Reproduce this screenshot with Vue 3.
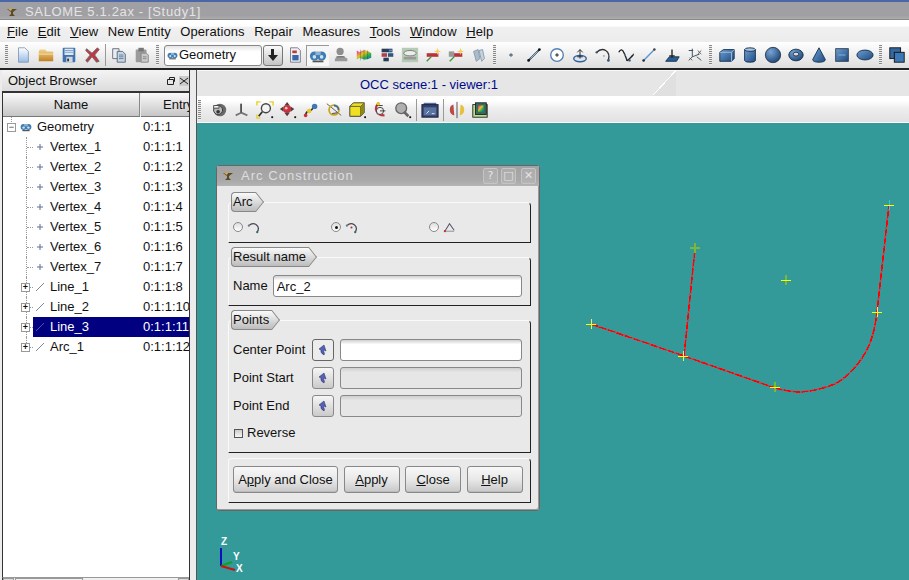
<template>
  <div class="app">
    <!-- icon sprite -->
    <svg class="sprite" aria-hidden="true">
      <defs>
        <linearGradient id="gPage" x1="0" y1="0" x2="0" y2="1"><stop offset="0" stop-color="#fff"/><stop offset="1" stop-color="#93bbe8"/></linearGradient>
        <linearGradient id="gFolder" x1="0" y1="0" x2="0" y2="1"><stop offset="0" stop-color="#f2d28c"/><stop offset="1" stop-color="#c07f22"/></linearGradient>
        <linearGradient id="gBlue" x1="0" y1="0" x2="1" y2="1"><stop offset="0" stop-color="#6f9fd2"/><stop offset="1" stop-color="#1d4a80"/></linearGradient>
        <radialGradient id="gBall" cx=".35" cy=".3" r=".8"><stop offset="0" stop-color="#79a6d6"/><stop offset="1" stop-color="#173f70"/></radialGradient>
        <linearGradient id="gRainbow" x1="0" y1="0" x2="1" y2="1"><stop offset="0" stop-color="#e020c0"/><stop offset=".4" stop-color="#e8c020"/><stop offset=".7" stop-color="#20b050"/><stop offset="1" stop-color="#2060d0"/></linearGradient>
      </defs>
      <symbol id="i-new" viewBox="0 0 20 20"><path d="M5 2h7l4 4v12H5z" fill="url(#gPage)" stroke="#8a9ab0"/></symbol>
      <symbol id="i-open" viewBox="0 0 20 20"><path d="M2 6q0-2 2-2h5l2 2h6q1 0 1 1v10H2z" fill="url(#gFolder)"/><path d="M2 9h16" stroke="#fbe4a8"/></symbol>
      <symbol id="i-save" viewBox="0 0 20 20"><rect x="3" y="2" width="14" height="16" rx="1" fill="#3f73ae"/><rect x="5" y="3" width="10" height="7" fill="#dfe8f2"/><path d="M5 5h10M5 7h10" stroke="#7fa0c8"/><rect x="7" y="12" width="7" height="6" fill="#cfd6de"/><rect x="8" y="14" width="2" height="3" fill="#333"/></symbol>
      <symbol id="i-delete" viewBox="0 0 20 20"><path d="M4 3l6 5 6-6 2 2-5 6 5 7-3 1-5-6-5 6-2-2 5-6-5-5z" fill="#c23642" stroke="#6a6a6a"/></symbol>
      <symbol id="i-copy" viewBox="0 0 20 20"><path d="M3 3h7v11H3z" fill="#e8eef4" stroke="#667"/><path d="M8 6h6l3 3v9H8z" fill="#c6d6e6" stroke="#567"/><path d="M10 10h5M10 12h5M10 14h5" stroke="#678"/></symbol>
      <symbol id="i-paste" viewBox="0 0 20 20"><rect x="3" y="4" width="12" height="14" rx="1" fill="#9b9b9b"/><rect x="6" y="2" width="6" height="4" fill="#777"/><path d="M9 8h6l2 2v8H9z" fill="#c9c9c9" stroke="#888"/><path d="M11 12h4M11 14h4" stroke="#888"/></symbol>
      <symbol id="i-study" viewBox="0 0 20 20"><path d="M5 2h8l3 3v13H5z" fill="#eef0f4" stroke="#778"/><rect x="7" y="5" width="5" height="3" fill="#c03a3a"/><rect x="7" y="10" width="7" height="6" fill="#3868a8"/></symbol>
      <symbol id="i-geom" viewBox="0 0 20 20"><circle cx="6" cy="10" r="5" fill="#3e7cb4"/><circle cx="14" cy="10" r="5" fill="#3e7cb4"/><rect x="7" y="5" width="6" height="4" fill="#8db0cc"/><circle cx="6" cy="11" r="2" fill="#cfe2f0"/><circle cx="14" cy="11" r="2" fill="#cfe2f0"/><path d="M4 16h12" stroke="#555" stroke-width="2"/></symbol>
      <symbol id="i-smesh" viewBox="0 0 20 20"><circle cx="9" cy="6" r="4" fill="#8e8e8e"/><path d="M3 17q0-6 6-6h3l5 3v3z" fill="#999"/><path d="M5 12h9" stroke="#666"/></symbol>
      <symbol id="i-post" viewBox="0 0 20 20"><path d="M2 5v10l3-2q6 4 13 0v-5q-7-6-13-1z" fill="url(#gRainbow)"/><path d="M6 4v12M10 4v12M14 5v10" stroke="#222" stroke-opacity=".35"/></symbol>
      <symbol id="i-blocks" viewBox="0 0 20 20"><rect x="4" y="3" width="12" height="4" fill="#2a3d58"/><rect x="4" y="8" width="6" height="4" fill="#b0404a"/><rect x="11" y="8" width="6" height="4" fill="#33547c"/><rect x="6" y="13" width="6" height="4" fill="#2a3d58"/><rect x="12" y="4" width="4" height="2" fill="#5a90c8"/></symbol>
      <symbol id="i-grid" viewBox="0 0 20 20"><rect x="1" y="2" width="18" height="16" fill="#b4ccb4"/><ellipse cx="10" cy="8" rx="7" ry="3" fill="#ececec" stroke="#777"/><path d="M3 12h14v3H3z" fill="#999"/></symbol>
      <symbol id="i-star" viewBox="0 0 20 20"><rect x="3" y="8" width="13" height="4" fill="#b8323c"/><path d="M3 17l5-5" stroke="#3a9a3a" stroke-width="1.5"/><path d="M15 2l1 3 3 1-3 1-1 3-1-3-3-1 3-1z" fill="#f2d060"/></symbol>
      <symbol id="i-star2" viewBox="0 0 20 20"><rect x="7" y="8" width="10" height="4" fill="#b8323c"/><rect x="2" y="6" width="6" height="6" fill="#999"/><path d="M3 17l5-5" stroke="#3a9a3a" stroke-width="1.5"/><path d="M15 2l1 3 3 1-3 1-1 3-1-3-3-1 3-1z" fill="#f2d060"/></symbol>
      <symbol id="i-pipes" viewBox="0 0 20 20"><path d="M4 6l5-2 2 10-4 3z" fill="#a8bccc" stroke="#8a9aaa"/><path d="M10 5l4-1 2 10-3 3z" fill="#c4d2de" stroke="#8a9aaa"/></symbol>
      <symbol id="i-point" viewBox="0 0 20 20"><path d="M10 8v4M8 10h4" stroke="#5a6f90" stroke-width="1.5"/></symbol>
      <symbol id="i-line" viewBox="0 0 20 20"><path d="M4 16L16 4" stroke="#28405f" stroke-width="2"/><path d="M6 14L14 6" stroke="#a8c4e4"/><circle cx="4" cy="16" r="1.5" fill="#111"/><circle cx="16" cy="4" r="1.5" fill="#111"/></symbol>
      <symbol id="i-circle" viewBox="0 0 20 20"><circle cx="10" cy="10" r="7" fill="#fff" stroke="#5680b4" stroke-width="1.5"/><path d="M10 8v4M8 10h4" stroke="#111"/></symbol>
      <symbol id="i-ellipse" viewBox="0 0 20 20"><ellipse cx="10" cy="14" rx="7" ry="3.5" fill="#dce6f0" stroke="#2f5f96" stroke-width="1.5"/><path d="M10 4v10M7 7l3-3 3 3M7 12h6" stroke="#222" fill="none"/></symbol>
      <symbol id="i-arc" viewBox="0 0 20 20"><path d="M3 7q5-5 10-2t3 11" fill="none" stroke="#333" stroke-width="1.5"/><circle cx="3" cy="7" r="1.3" fill="#456"/><circle cx="16" cy="16" r="1.5" fill="#2a5a90"/><circle cx="11" cy="11" r=".8" fill="#666"/></symbol>
      <symbol id="i-spline" viewBox="0 0 20 20"><path d="M2 7q3-6 6 1t3 8 4-3 3-4" fill="none" stroke="#222" stroke-width="1.5"/><circle cx="9" cy="10" r="1" fill="#5680b4"/><circle cx="14" cy="16" r="1.3" fill="#2a5a90"/></symbol>
      <symbol id="i-vector" viewBox="0 0 20 20"><path d="M4 16L16 4" stroke="#5a94d0" stroke-width="1.5"/><circle cx="4" cy="16" r="1.4" fill="#222"/><circle cx="16" cy="4" r="1.4" fill="#444"/></symbol>
      <symbol id="i-plane" viewBox="0 0 20 20"><path d="M3 17l4-5h11l-3 5z" fill="#2a5f96" stroke="#14304c"/><path d="M10 4v9M7 11h6" stroke="#222" stroke-width="1.5"/></symbol>
      <symbol id="i-axes" viewBox="0 0 20 20"><path d="M7 3v9l8-3M7 12l-4 4M12 12l5 4M3 5h5" stroke="#345" fill="none"/><path d="M13 5l4 4M17 5l-4 4M4 13l3 3" stroke="#555"/></symbol>
      <symbol id="i-box" viewBox="0 0 20 20"><path d="M2 7l4-3h12v10l-3 3H2z" fill="url(#gBlue)" stroke="#14304c"/><path d="M2 7h13v10M15 7l3-3" fill="none" stroke="#9fc0e0"/></symbol>
      <symbol id="i-cyl" viewBox="0 0 20 20"><path d="M4 4v12q0 2 6 2t6-2V4z" fill="url(#gBlue)" stroke="#14304c"/><ellipse cx="10" cy="4" rx="6" ry="2" fill="#a8c4e0" stroke="#14304c"/></symbol>
      <symbol id="i-sphere" viewBox="0 0 20 20"><circle cx="10" cy="10" r="8.5" fill="url(#gBall)" stroke="#2a3a4c"/></symbol>
      <symbol id="i-torus" viewBox="0 0 20 20"><ellipse cx="10" cy="10" rx="8" ry="6.5" fill="url(#gBall)" stroke="#14304c"/><ellipse cx="10" cy="9" rx="3.2" ry="2.2" fill="#d4d8dc" stroke="#14304c"/></symbol>
      <symbol id="i-cone" viewBox="0 0 20 20"><path d="M10 2L3 15q0 3 7 3t7-3z" fill="url(#gBlue)" stroke="#14304c"/></symbol>
      <symbol id="i-square" viewBox="0 0 20 20"><rect x="3" y="3" width="14" height="14" fill="url(#gBlue)" stroke="#2a3a4c"/><path d="M6 10h8" stroke="#8fb4da"/></symbol>
      <symbol id="i-disc" viewBox="0 0 20 20"><ellipse cx="10" cy="10" rx="9" ry="5.5" fill="url(#gBlue)" stroke="#14304c"/></symbol>
      <symbol id="i-fuse" viewBox="0 0 20 20"><rect x="2" y="2" width="12" height="12" fill="#3568a0" stroke="#111"/><rect x="7" y="7" width="11" height="11" fill="#3a78b8" stroke="#111"/></symbol>
      <symbol id="i-cam" viewBox="0 0 20 20"><circle cx="11" cy="10" r="7" fill="#6a6a6a"/><circle cx="9" cy="10" r="5" fill="#b8b8b8" stroke="#333"/><path d="M4 5h6v3H4z" fill="#eee" stroke="#444"/><circle cx="9" cy="12" r="2" fill="#333"/></symbol>
      <symbol id="i-triad" viewBox="0 0 20 20"><path d="M9 3v10L3 16M9 13l7 3" fill="none" stroke="#777" stroke-width="2"/><path d="M9 3v10" stroke="#333"/></symbol>
      <symbol id="i-zoom" viewBox="0 0 20 20"><path d="M1 5V1h4M15 1h4v4M1 15v4h4" fill="none" stroke="#e8d020" stroke-width="1.5"/><circle cx="11" cy="8" r="5" fill="#f4f4f4" stroke="#444" stroke-width="1.5"/><path d="M7 12l-4 5" stroke="#333" stroke-width="2"/><rect x="17" y="17" width="2" height="2" fill="#111"/></symbol>
      <symbol id="i-pan" viewBox="0 0 20 20"><path d="M9 1l3 4H6zM9 17l3-4H6zM1 9l4-3v6zM17 9l-4-3v6z" fill="#444"/><circle cx="9" cy="9" r="4.5" fill="#c8323c"/><circle cx="8" cy="8" r="1.5" fill="#f0c0c0"/><rect x="17" y="17" width="2" height="2" fill="#111"/></symbol>
      <symbol id="i-spin" viewBox="0 0 20 20"><path d="M4 17q0-5 4-6t5-5" fill="none" stroke="#333" stroke-width="2"/><circle cx="14" cy="6" r="3" fill="#3f78b8"/><circle cx="8" cy="11" r="2.5" fill="#e8c820"/><circle cx="4" cy="16" r="2" fill="#c8323c"/></symbol>
      <symbol id="i-rot" viewBox="0 0 20 20"><path d="M2 3l16 13" stroke="#555"/><circle cx="10" cy="10" r="5.5" fill="none" stroke="#c8a820" stroke-width="2"/><path d="M10 5a5 5 0 015 5" fill="none" stroke="#3f68a8" stroke-width="2"/><path d="M8 14l6-1" stroke="#333"/></symbol>
      <symbol id="i-cube" viewBox="0 0 20 20"><path d="M2 6l4-4h12v11l-4 4H2z" fill="#f0e020" stroke="#333"/><path d="M2 6h12v11M14 6l4-4" fill="none" stroke="#555"/><path d="M14 6l4-4v11l-4 4z" fill="#908a10"/><rect x="18" y="17" width="2" height="2" fill="#111"/></symbol>
      <symbol id="i-turn" viewBox="0 0 20 20"><path d="M9 2q-5 4-3 9t9 5" fill="none" stroke="#c8323c" stroke-width="2.5"/><circle cx="10" cy="11" r="4" fill="#eee" stroke="#333"/><path d="M6 5h7M10 11h6" stroke="#333"/><circle cx="8" cy="3" r="2" fill="#e8c820"/></symbol>
      <symbol id="i-zoomg" viewBox="0 0 20 20"><circle cx="8" cy="8" r="6" fill="#b0b0b0" stroke="#666" stroke-width="1.5"/><path d="M11 12l5 5" stroke="#666" stroke-width="3"/><rect x="17" y="17" width="2" height="2" fill="#111"/></symbol>
      <symbol id="i-term" viewBox="0 0 20 20"><rect x="3" y="2" width="14" height="4" fill="#5a6aa8"/><rect x="1" y="4" width="18" height="14" fill="#2e3f72" stroke="#223"/><rect x="3" y="7" width="14" height="9" fill="#5a74a0"/><path d="M6 14l3-3M12 14h3" stroke="#e4e8f0"/></symbol>
      <symbol id="i-clip" viewBox="0 0 20 20"><path d="M2 10q0-5 4-6l1 12q-5-1-5-6z" fill="#b84a4a"/><path d="M10 1v18" stroke="#444"/><path d="M18 10q0-5-4-6l-1 12q5-1 5-6z" fill="#e8c040"/></symbol>
      <symbol id="i-color" viewBox="0 0 20 20"><rect x="2" y="4" width="16" height="14" fill="#b8e090" stroke="#222"/><rect x="5" y="2" width="12" height="13" fill="#3a6a58" stroke="#222"/><rect x="8" y="5" width="6" height="7" fill="url(#gRainbow)"/></symbol>
      <symbol id="i-pick" viewBox="0 0 12 12"><path d="M7 1L2 5l2 1q-1 3 3 5 1-1 0-3-1-1 0-2l2 1z" fill="#5560b8" stroke="#222a60" stroke-width=".5"/></symbol>
      <symbol id="i-logo" viewBox="0 0 12 12"><path d="M1 3h10L7 6v2l2 2H3l2-2V6z" fill="#5c4a20"/><path d="M2 3h4L5 5z" fill="#e8b030"/></symbol>
      <symbol id="i-arcA" viewBox="0 0 14 14"><path d="M2 5q4-4 8-1t1 8" fill="none" stroke="#445" stroke-width="1.3"/><circle cx="2" cy="5" r="1.2" fill="#6a7a90"/><circle cx="11" cy="12" r="1.2" fill="#2a6a70"/></symbol>
      <symbol id="i-arcB" viewBox="0 0 14 14"><path d="M2 5q4-4 8-1t1 8" fill="none" stroke="#445" stroke-width="1.3"/><circle cx="2" cy="5" r="1.2" fill="#6a7a90"/><circle cx="7" cy="7" r="1.1" fill="#d02020"/><circle cx="11" cy="12" r="1.2" fill="#2a6a70"/></symbol>
      <symbol id="i-arcC" viewBox="0 0 14 14"><path d="M2 11L7 3l5 7" fill="none" stroke="#556" stroke-width="1.1"/><path d="M2 11h10" stroke="#889"/><circle cx="2" cy="11" r="1.2" fill="#c83030"/></symbol>
    </svg>

    <header class="titlebar">
      <svg class="logo"><use href="#i-logo"/></svg>
      <span class="title-text">SALOME 5.1.2ax - [Study1]</span>
    </header>

    <nav class="menubar">
      <span v-for="m in menus" :key="m.rest"><u v-if="m.key">{{ m.key }}</u>{{ m.rest }}</span>
    </nav>

    <div class="toolbar">
      <span class="grip"></span>
      <span v-for="i in fileTools" :key="i" class="tool"><svg><use :href="'#i-' + i"/></svg></span>
      <span class="sep"></span>
      <span v-for="i in editTools" :key="i" class="tool"><svg><use :href="'#i-' + i"/></svg></span>
      <span class="grip"></span>
      <div class="combo">
        <svg class="combo-icon"><use href="#i-geom"/></svg>
        <span>Geometry</span>
      </div>
      <div class="combo-btn">
        <svg viewBox="0 0 14 14"><path d="M5 1h3v6h4l-5 6-5-6h3z" fill="#222"/></svg>
      </div>
      <span v-for="i in moduleTools" :key="i" class="tool" :class="{ active: i === 'geom' }"><svg><use :href="'#i-' + i"/></svg></span>
      <span class="grip"></span>
      <span v-for="i in basicTools" :key="i" class="tool"><svg><use :href="'#i-' + i"/></svg></span>
      <span class="grip"></span>
      <span v-for="i in primTools" :key="i" class="tool"><svg><use :href="'#i-' + i"/></svg></span>
      <span class="grip"></span>
      <span class="tool"><svg><use href="#i-fuse"/></svg></span>
    </div>

    <div class="main">
      <aside class="dock">
        <div class="dock-title">
          <span>Object Browser</span>
          <span class="dock-btns">
            <svg viewBox="0 0 10 10"><path d="M1.5 3.5h6v5h-6zM3.5 3V1.5h5v4H8" fill="none" stroke="#222"/></svg>
            <svg viewBox="0 0 10 10"><rect width="10" height="10" fill="#ccc"/><path d="M1 2l8 6M9 2L1 8" stroke="#222"/></svg>
          </span>
        </div>
        <div class="tree-head">
          <div class="col-name">Name</div>
          <div class="col-entry">Entry</div>
        </div>
        <div class="tree">
          <div v-for="(row, n) in rows" :key="row.name" class="row" :class="{ root: n === 0, last: n === rows.length - 1 }">
            <span class="branch">
              <i v-if="n === 0" class="expander">−</i>
              <i v-else-if="row.kind === 'line'" class="expander">+</i>
            </span>
            <svg v-if="n === 0" class="root-icon"><use href="#i-geom"/></svg>
            <div class="cell" :class="{ selected: row.name === 'Line_3' }">
              <svg class="row-icon" viewBox="0 0 12 12">
                <path v-if="row.kind === 'vertex'" d="M6 3v6M3 6h6" stroke="#5c6f94"/>
                <path v-else-if="n > 0" d="M2 10l8-8" :stroke="row.name === 'Line_3' ? '#4a5aa0' : '#7c8a94'"/>
              </svg>
              <span class="row-name">{{ row.name }}</span>
              <span class="row-entry">{{ row.entry }}</span>
            </div>
          </div>
        </div>
        <div class="hscroll">
          <span class="sb-btn"></span>
          <span class="sb-thumb"></span>
          <span class="sb-track"></span>
          <span class="sb-btn"></span>
        </div>
      </aside>

      <div class="splitter"></div>

      <section class="viewer">
        <div class="tabbar">
          <span class="tab-title">OCC scene:1 - viewer:1</span>
          <span class="tab-slant"></span>
        </div>
        <div class="viewer-tools">
          <span class="grip"></span>
          <span v-for="i in viewTools" :key="i" class="tool"><svg><use :href="'#i-' + i"/></svg></span>
          <span class="sep"></span>
          <span class="tool"><svg><use href="#i-term"/></svg></span>
          <span class="sep"></span>
          <span class="tool"><svg><use href="#i-clip"/></svg></span>
          <span class="tool"><svg><use href="#i-color"/></svg></span>
        </div>
        <div class="scene">
          <svg class="canvas" viewBox="197 123 712 457" shape-rendering="crispEdges">
            <g v-for="s in shapes" :key="s" fill="none">
              <path :d="s" stroke="#a25560" stroke-width="2"/>
              <path :d="s" stroke="#ff0000" stroke-width="1.4" stroke-dasharray="7 2"/>
            </g>
            <g v-for="p in points" :key="p.x">
              <path :d="`M${p.x} ${p.y - 5}v10`" :stroke="p.c || (p.dim ? '#7ab83c' : '#e8f060')" :stroke-width="p.dim ? 2 : 1"/>
              <path :d="`M${p.x - 5} ${p.y}h10`" :stroke="p.flat ? '#7ab83c' : '#ffff00'" :stroke-width="p.flat ? 2 : 1"/>
            </g>
            <g shape-rendering="auto">
              <path d="M221 566V548" stroke="#0a10c0" stroke-width="2"/>
              <path d="M221 566l11-4" stroke="#10a020" stroke-width="2"/>
              <path d="M221 566l14 4" stroke="#d01010" stroke-width="2"/>
              <text x="221" y="545" class="axis">Z</text>
              <text x="233" y="560" class="axis">Y</text>
              <text x="236" y="572" class="axis">X</text>
            </g>
          </svg>

          <div class="dialog">
            <div class="dlg-title">
              <svg class="logo"><use href="#i-logo"/></svg>
              <span class="dlg-caption">Arc Construction</span>
              <span class="dlg-btn">?</span>
              <span class="dlg-btn">□</span>
              <span class="dlg-btn close">✕</span>
            </div>
            <div class="dlg-body">
              <div class="group first">
                <div class="tab"><span>Arc</span></div>
                <div class="arc-opts">
                  <div v-for="o in arcOptions" :key="o.icon" class="arc-opt">
                    <span class="radio" :class="{ on: o.on }"></span>
                    <svg><use :href="'#i-' + o.icon"/></svg>
                  </div>
                </div>
              </div>

              <div class="group">
                <div class="tab"><span>Result name</span></div>
                <div class="name-row">
                  <label>Name</label>
                  <input class="field" value="Arc_2" readonly>
                </div>
              </div>

              <div class="group">
                <div class="tab"><span>Points</span></div>
                <div class="points">
                  <template v-for="p in pointRows" :key="p.label">
                    <label>{{ p.label }}</label>
                    <button class="pick" :class="{ pressed: p.active }"><svg><use href="#i-pick"/></svg></button>
                    <input class="field" :class="{ off: !p.active }" readonly>
                  </template>
                </div>
                <div class="reverse"><span class="check"></span>Reverse</div>
              </div>

              <div class="group actions">
                <button class="btn wide">A<u>p</u>ply and Close</button>
                <button class="btn"><u>A</u>pply</button>
                <button class="btn"><u>C</u>lose</button>
                <button class="btn"><u>H</u>elp</button>
              </div>
            </div>
          </div>
        </div>
      </section>
    </div>
  </div>
</template>

<script setup>
const menus = [
  { key: 'F', rest: 'ile' },
  { key: 'E', rest: 'dit' },
  { key: 'V', rest: 'iew' },
  { key: '', rest: 'New Entity' },
  { key: '', rest: 'Operations' },
  { key: '', rest: 'Repair' },
  { key: '', rest: 'Measures' },
  { key: 'T', rest: 'ools' },
  { key: 'W', rest: 'indow' },
  { key: 'H', rest: 'elp' },
]

const fileTools = ['new', 'open', 'save', 'delete']
const editTools = ['copy', 'paste']
const moduleTools = ['study', 'geom', 'smesh', 'post', 'blocks', 'grid', 'star', 'star2', 'pipes']
const basicTools = ['point', 'line', 'circle', 'ellipse', 'arc', 'spline', 'vector', 'plane', 'axes']
const primTools = ['box', 'cyl', 'sphere', 'torus', 'cone', 'square', 'disc']
const viewTools = ['cam', 'triad', 'zoom', 'pan', 'spin', 'rot', 'cube', 'turn', 'zoomg']

const rows = [
  { name: 'Geometry', entry: '0:1:1', kind: 'root' },
  { name: 'Vertex_1', entry: '0:1:1:1', kind: 'vertex' },
  { name: 'Vertex_2', entry: '0:1:1:2', kind: 'vertex' },
  { name: 'Vertex_3', entry: '0:1:1:3', kind: 'vertex' },
  { name: 'Vertex_4', entry: '0:1:1:4', kind: 'vertex' },
  { name: 'Vertex_5', entry: '0:1:1:5', kind: 'vertex' },
  { name: 'Vertex_6', entry: '0:1:1:6', kind: 'vertex' },
  { name: 'Vertex_7', entry: '0:1:1:7', kind: 'vertex' },
  { name: 'Line_1', entry: '0:1:1:8', kind: 'line' },
  { name: 'Line_2', entry: '0:1:1:10', kind: 'line' },
  { name: 'Line_3', entry: '0:1:1:11', kind: 'line' },
  { name: 'Arc_1', entry: '0:1:1:12', kind: 'line' },
]

const arcOptions = [
  { icon: 'arcA', on: false },
  { icon: 'arcB', on: true },
  { icon: 'arcC', on: false },
]

const pointRows = [
  { label: 'Center Point', active: true },
  { label: 'Point Start', active: false },
  { label: 'Point End', active: false },
]

// model shown in the viewer, in window pixels
const shapes = [
  'M591 324L684 356L775 388',
  'M684 356L695 249',
  'M775 388Q790 392 801 392Q818 391 837 383Q848 376 857 365Q865 355 870 343Q875 330 877 312L889 205',
]
const points = [
  { x: 591, y: 324 },
  { x: 683, y: 356 },
  { x: 775, y: 387, dim: true },
  { x: 695, y: 248, dim: true, flat: true },
  { x: 786, y: 280, dim: true },
  { x: 877, y: 312 },
  { x: 889, y: 205, c: '#30c8e8' },
]
</script>

<style scoped>
.app {
  position: relative;
  width: 909px;
  height: 580px;
  overflow: hidden;
  display: flex;
  flex-direction: column;
  background: #ececec;
  color: #111;
  font: 13px/16px "Liberation Sans", Arial, sans-serif;
}

.sprite {
  position: absolute;
  width: 0;
  height: 0;
}

/* title bar */
.titlebar {
  height: 17px;
  flex: none;
  display: flex;
  align-items: center;
  padding: 1px 0 0 6px;
  border-top: 2px solid #4a68a8;
  background: linear-gradient(#a0a0a4 0, #a0a0a4 75%, #b0b0b0 100%);
  box-shadow: inset 0 -1px #8a8a8a;
}
.logo {
  width: 12px;
  height: 12px;
  flex: none;
}
.title-text {
  margin-left: 7px;
  color: #e4e4e4;
  letter-spacing: 0.65px;
}

/* menu */
.menubar {
  height: 22px;
  flex: none;
  box-sizing: border-box;
  display: flex;
  align-items: center;
  gap: 9.5px;
  padding: 2px 0 0 7px;
  letter-spacing: 0.08px;
  background: linear-gradient(#fff 0, #fff 25%, #f0f0f0 35%, #ececec 100%);
}

/* toolbars */
.toolbar {
  height: 28px;
  flex: none;
  box-sizing: border-box;
  display: flex;
  align-items: center;
  padding-left: 5px;
  background: linear-gradient(#fff, #f0f0f0 45%, #dedede);
  border-bottom: 2px solid #222;
}
.grip {
  width: 3px;
  height: 20px;
  flex: none;
  margin: 0 3px;
  background: repeating-linear-gradient(#8a8a8a 0 1px, #eee 1px 2px);
}
.toolbar > .grip:first-child {
  margin-left: 0;
}
.sep {
  width: 1px;
  height: 22px;
  flex: none;
  margin: 0 1px 0 2px;
  background: #999;
}
.tool {
  width: 23px;
  height: 21px;
  flex: none;
  box-sizing: border-box;
  display: flex;
  align-items: center;
  justify-content: center;
}
.tool svg {
  width: 18px;
  height: 18px;
  filter: blur(0.3px);
}
.tool.active {
  background: #f6f6f6;
  border-top: 1px solid #999;
  border-left: 1px solid #999;
}

.combo {
  width: 98px;
  height: 21px;
  flex: none;
  box-sizing: border-box;
  margin-left: 2px;
  display: flex;
  align-items: center;
  gap: 1px;
  padding-left: 2px;
  border: 1px solid #888;
  border-radius: 3px;
  background: linear-gradient(#e4e4e4, #fff 30%);
}
.combo-icon {
  width: 11px;
  height: 11px;
}
.combo-btn {
  width: 20px;
  height: 21px;
  flex: none;
  box-sizing: border-box;
  margin-left: 1px;
  display: flex;
  align-items: center;
  justify-content: center;
  border: 1px solid #777;
  border-radius: 3px;
  background: linear-gradient(#fafafa, #c4c4c4);
}
.combo-btn svg {
  width: 14px;
  height: 14px;
}

.main {
  flex: 1;
  min-height: 0;
  display: flex;
}

/* object browser */
.dock {
  width: 187px;
  margin-left: 2px;
  flex: none;
  display: flex;
  flex-direction: column;
  box-sizing: content-box;
  border-right: 1px solid #333;
}
.dock-title {
  height: 21px;
  flex: none;
  display: flex;
  align-items: center;
  justify-content: space-between;
  padding-left: 6px;
  background: linear-gradient(#f4f4f4, #dcdcdc);
  border-bottom: 2px solid #333;
}
.dock-btns {
  display: flex;
  gap: 3px;
}
.dock-btns svg {
  width: 10px;
  height: 10px;
}
.tree-head {
  height: 24px;
  flex: none;
  display: flex;
  text-align: center;
  border-left: 1px solid #333;
  line-height: 23px;
}
.col-name,
.col-entry {
  background: linear-gradient(#fafafa, #c6c6c6);
  border-right: 1px solid #888;
  border-bottom: 1px solid #777;
  box-sizing: border-box;
}
.col-name {
  width: 137px;
}
.col-entry {
  flex: 1;
  text-align: left;
  padding-left: 22px;
  overflow: hidden;
  border-right: none;
  margin-left: 1px;
}
.tree {
  height: 460px;
  flex: none;
  background: #fff;
  border-left: 1px solid #333;
}
.row {
  position: relative;
  height: 20px;
  display: flex;
  align-items: center;
  overflow: hidden;
}
.branch {
  position: relative;
  width: 30px;
  height: 20px;
  flex: none;
}
.branch::before {
  content: "";
  position: absolute;
  left: 23px;
  top: 0;
  height: 20px;
  border-left: 1px dotted #999;
}
.branch::after {
  content: "";
  position: absolute;
  left: 24px;
  top: 10px;
  width: 6px;
  border-top: 1px dotted #999;
}
.row.last .branch::before {
  height: 10px;
}
.row.root .branch::before {
  left: 8px;
  top: 0;
  height: 5px;
}
.row.root .branch::after {
  display: none;
}
.expander {
  position: absolute;
  left: 18px;
  top: 6px;
  z-index: 1;
  width: 7px;
  height: 7px;
  border: 1px solid #999;
  background: #fff;
  color: #111;
  font: bold 9px/7px "Liberation Sans", sans-serif;
  text-align: center;
}
.row.root .expander {
  left: 4px;
  color: #777;
}
.root-icon {
  width: 12px;
  height: 12px;
  flex: none;
  margin-left: -13px;
  position: relative;
}
.cell {
  flex: 1;
  min-width: 0;
  height: 20px;
  display: flex;
  align-items: center;
}
.cell.selected {
  background: #000080;
  color: #fff;
}
.row-icon {
  width: 12px;
  height: 12px;
  flex: none;
  margin-left: 1px;
  margin-right: 4px;
}
.row-name {
  width: 93px;
  flex: none;
}
.row-entry {
  white-space: nowrap;
  overflow: hidden;
}
.row.root .row-icon {
  width: 0;
  margin: 0;
}
.row.root .row-name {
  width: 106px;
  margin-left: 5px;
}
.hscroll {
  height: 16px;
  flex: none;
  display: flex;
  gap: 1px;
  border-left: 1px solid #333;
  border-top: 1px solid #999;
}
.sb-btn {
  width: 11px;
  background: #ddd;
  border: 1px solid #999;
  box-sizing: border-box;
}
.sb-thumb {
  width: 68px;
  background: linear-gradient(#f4f4f4, #ccc);
  border: 1px solid #999;
  box-sizing: border-box;
}
.sb-track {
  flex: 1;
  background: #f0f0f0;
}

.splitter {
  width: 6px;
  flex: none;
  background: #ececec;
}

/* viewer */
.viewer {
  flex: 1;
  min-width: 0;
  display: flex;
  flex-direction: column;
  border-left: 1px solid #555;
}
.tabbar {
  position: relative;
  height: 27px;
  flex: none;
  display: flex;
  align-items: center;
  padding: 3px 0 0 163px;
  box-sizing: border-box;
  background: #e6e6e6;
  border-top: 1px solid #f8f8f8;
  border-bottom: 1px solid #fff;
}
.tab-title {
  color: #000a8c;
}
.tab-slant {
  position: absolute;
  left: 456px;
  top: 0;
  bottom: 0;
  width: 23px;
  background: linear-gradient(to bottom right, transparent calc(50% - 1px), #fff calc(50% - 1px), #fff 50%, #e0e0e0 50%);
}
.viewer-tools {
  height: 26px;
  flex: none;
  box-sizing: border-box;
  display: flex;
  align-items: center;
  padding-left: 0;
  background: linear-gradient(#fff, #fff 15%, #eee 45%, #e2e2e2);
  border-bottom: 1px solid #fff;
}
.viewer-tools .grip {
  margin-left: 1px;
  margin-right: 6px;
}
.scene {
  position: relative;
  flex: 1;
  min-height: 0;
  background: #339999;
}
.canvas {
  position: absolute;
  left: 0;
  top: 0;
  width: 712px;
  height: 457px;
}
.axis {
  fill: #fff;
  font: bold 10px "Liberation Sans", sans-serif;
}

/* Arc Construction dialog */
.dialog {
  position: absolute;
  left: 19px;
  top: 42px;
  width: 324px;
  height: 346px;
  box-sizing: border-box;
  border: 1px solid #666;
  border-radius: 3px;
  background: #e9e9e9;
  box-shadow: inset -1px -1px #999;
}
.dlg-title {
  height: 20px;
  display: flex;
  align-items: center;
  padding: 0 3px 0 5px;
  background: linear-gradient(#a2a2a4, #a8a8a8 70%, #b4b4b4);
}
.dlg-caption {
  flex: 1;
  margin-left: 7px;
  color: #dedede;
  letter-spacing: 1.05px;
}
.dlg-btn {
  width: 15px;
  height: 16px;
  box-sizing: border-box;
  margin-left: 3px;
  border: 1px solid #c4c4c4;
  border-radius: 2px;
  background: rgba(255, 255, 255, 0.1);
  color: #e4e4e4;
  font: 11px/14px "DejaVu Sans", sans-serif;
  text-align: center;
}
.dlg-btn.close {
  margin-left: 5px;
}
.dlg-body {
  padding: 16px 8px 0 11px;
}
.group {
  margin-top: 14px;
  border: 1px solid #fafafa;
  border-right-color: #222;
  border-bottom-color: #222;
  border-radius: 4px 4px 0 0;
}
.group.first {
  margin-top: 0;
}
.tab {
  position: relative;
  display: block;
  width: fit-content;
  height: 20px;
  box-sizing: border-box;
  margin: -11px 0 0 2px;
  padding: 0 3px 0 1px;
  border: 1px solid #888;
  border-right: none;
  border-radius: 4px 0 0 4px;
  line-height: 18px;
  background: linear-gradient(#fafafa, #bcbcbc);
}
.tab span {
  position: relative;
  z-index: 1;
}
.tab::after {
  content: "";
  position: absolute;
  right: -7px;
  top: 2px;
  width: 14px;
  height: 14px;
  box-sizing: border-box;
  border-top: 1px solid #888;
  border-right: 1px solid #888;
  background: linear-gradient(135deg, #fafafa, #bcbcbc);
  transform: scaleX(0.8) rotate(45deg);
}
.arc-opts {
  display: grid;
  grid-template-columns: repeat(3, 98px);
  height: 30px;
  align-items: center;
  padding-left: 4px;
}
.arc-opt {
  display: flex;
  align-items: center;
  gap: 4px;
}
.arc-opt svg {
  width: 13px;
  height: 13px;
}
.radio {
  position: relative;
  width: 8px;
  height: 8px;
  border: 1px solid #888;
  border-radius: 50%;
  background: linear-gradient(#ddd, #fff);
}
.radio.on::after {
  content: "";
  position: absolute;
  left: 2.5px;
  top: 2.5px;
  width: 3px;
  height: 3px;
  border-radius: 50%;
  background: #111;
}
.name-row {
  display: flex;
  align-items: center;
  gap: 5px;
  height: 38px;
  padding-left: 4px;
}
.field {
  height: 22px;
  box-sizing: border-box;
  min-width: 0;
  padding: 0 3px;
  border: 1px solid #888;
  border-radius: 3px;
  background: linear-gradient(#cfcfcf, #fff 22%);
  font: inherit;
  color: #111;
  outline: none;
}
.name-row .field {
  width: 249px;
}
.field.off {
  background: linear-gradient(#cfcfcf, #e6e6e6 22%);
}
.points {
  display: grid;
  grid-template-columns: 79px 22px 182px;
  column-gap: 0;
  row-gap: 6px;
  align-items: center;
  padding: 9px 0 0 4px;
}
.points .field {
  width: 182px;
  margin-left: 6px;
}
.pick {
  width: 22px;
  height: 22px;
  padding: 0;
  display: flex;
  align-items: center;
  justify-content: center;
  border: 1px solid #888;
  border-radius: 3px;
  background: linear-gradient(#f6f6f6, #cacaca);
}
.pick.pressed {
  background: #ececec;
  border-color: #666;
}
.pick svg {
  width: 12px;
  height: 12px;
}
.reverse {
  display: flex;
  align-items: center;
  gap: 4px;
  height: 16px;
  margin: 8px 0 11px 5px;
}
.check {
  width: 7px;
  height: 7px;
  border: 1px solid #555;
  background: linear-gradient(#ccc, #f6f6f6);
}
.actions {
  display: flex;
  gap: 5.5px;
  margin-top: 5px;
  padding: 7px 0 9px 4px;
  border-radius: 4px 4px 0 0;
}
.btn {
  width: 56px;
  height: 27px;
  padding: 0;
  border: 1px solid #888;
  border-radius: 3px;
  background: linear-gradient(#f8f8f8, #e8e8e8 50%, #c8c8c8);
  box-shadow: inset 0 -1px #bbb;
  color: #111;
  font: inherit;
}
.btn.wide {
  width: 105px;
}
</style>

<style>
body {
  margin: 0;
  overflow: hidden;
}
</style>
